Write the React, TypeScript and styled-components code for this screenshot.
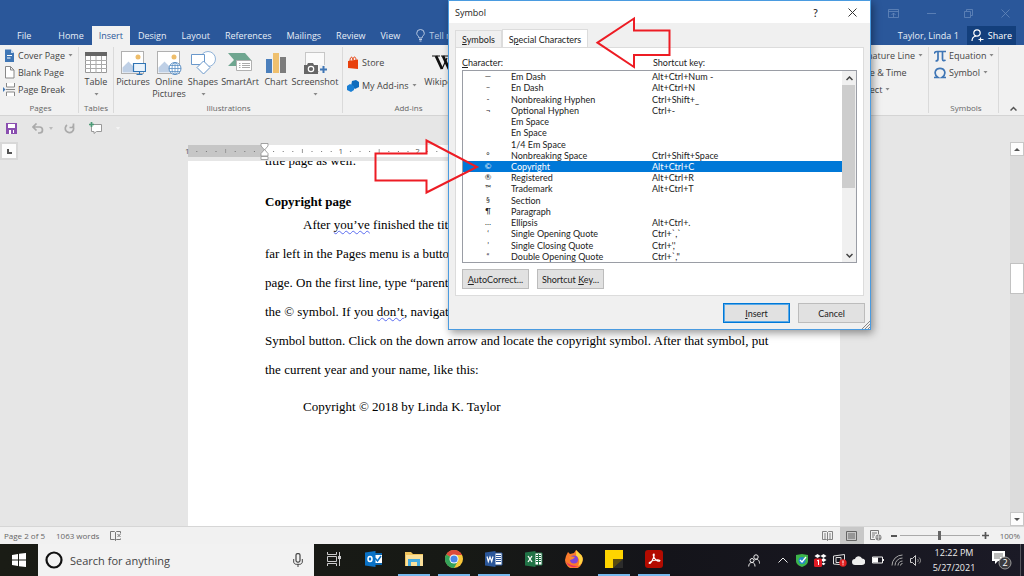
import React from 'react';
import styled, { createGlobalStyle, css } from 'styled-components';

const GlobalStyle = createGlobalStyle`
  *, *::before, *::after { box-sizing: border-box; }
  body { margin: 0; overflow: hidden; }
  body, button, input { font-family: 'Open Sans', 'Noto Sans', sans-serif; font-size: 9px; }
  button { border: 0; padding: 0; background: none; color: inherit; cursor: pointer; }
  svg { display: block; flex: none; }
  p, h2, ul { margin: 0; padding: 0; }
`;

const Desktop = styled.div`
  position: relative;
  display: flex;
  flex-direction: column;
  height: 100vh;
  background: #e6e6e6;
  color: #444;
  overflow: hidden;
  white-space: nowrap;
`;

/* ---------- title bar and tabs ---------- */

const TitleBar = styled.header`
  display: flex;
  justify-content: flex-end;
  align-items: center;
  height: 26px;
  padding: 0 14px;
  gap: 28px;
  background: #2a579a;
  color: #6688bb;
`;

const TabBar = styled.nav`
  display: flex;
  height: 19px;
  padding-left: 10px;
  background: #2a579a;
  color: #e8eef7;
`;

const RibbonTab = styled.button<{ $active?: boolean; $file?: boolean }>`
  padding: 0 7px;
  margin-right: ${p => (p.$file ? '13px' : '1px')};
  font-size: 9px;
  line-height: 19px;
  ${p => p.$active && css`
    background: #f1f1f1;
    color: #2a579a;
  `}
`;

const TellMe = styled.button`
  display: flex;
  align-items: center;
  gap: 4px;
  margin-left: 8px;
  color: #b9c9e2;
`;

const Account = styled.div`
  display: flex;
  align-items: center;
  margin-left: auto;
  gap: 8px;
`;

const ShareButton = styled.button`
  display: flex;
  align-items: center;
  gap: 4px;
  height: 19px;
  padding: 0 4px;
  margin-right: 8px;
  background: #133f7c;
  color: #fff;
`;

/* ---------- ribbon ---------- */

const Ribbon = styled.section`
  display: flex;
  height: 71px;
  background: #f1f1f1;
  border-bottom: 1px solid #d4d4d4;
`;

const Group = styled.div<{ $width: number; $pad?: number }>`
  display: flex;
  flex-direction: column;
  justify-content: space-between;
  width: ${p => p.$width}px;
  flex: none;
  margin: 2px 0;
  padding-left: ${p => p.$pad ?? 0}px;
  border-right: 1px solid #dadada;
`;

const GroupBody = styled.div`
  display: flex;
`;

const GroupLabel = styled.div`
  font-size: 8px;
  line-height: 11px;
  text-align: center;
  color: #666;
`;

const Stack = styled.div<{ $roomy?: boolean }>`
  display: flex;
  flex-direction: column;
  gap: ${p => (p.$roomy ? '6px' : '0')};
  padding-top: ${p => (p.$roomy ? '7px' : '0')};
  margin-right: ${p => (p.$roomy ? '4px' : '0')};
`;

const SmallButton = styled.button`
  display: flex;
  align-items: center;
  gap: 3px;
  height: 17px;
  color: #444;
`;

const BigButton = styled.button<{ $width: number }>`
  display: flex;
  flex-direction: column;
  align-items: center;
  width: ${p => p.$width}px;
  padding-top: 2px;
  line-height: 12px;
  color: #444;
`;

const BigIcon = styled.span`
  display: flex;
  align-items: center;
  height: 27px;
`;

const CaretBox = styled.span`
  display: flex;
  align-items: center;
  height: 12px;
`;

const Filler = styled.div`
  flex: 1;
`;

const CollapseButton = styled.button`
  display: flex;
  align-items: flex-end;
  padding: 0 7px 4px 11px;
`;

const QuickAccess = styled.div`
  display: flex;
  align-items: center;
  height: 26px;
  padding: 0 0 2px 6px;
`;

const QuickButton = styled.button<{ $space: number }>`
  margin-right: ${p => p.$space}px;
`;

/* ---------- document ---------- */

const Workspace = styled.main`
  display: flex;
  flex: 1;
  min-height: 0;
`;

const LeftEdge = styled.div`
  width: 18px;
  flex: none;
`;

const TabSelector = styled.button`
  display: flex;
  align-items: center;
  justify-content: center;
  width: 18px;
  height: 18px;
  background: #fcfcfc;
  border: 2px solid #d8d8d8;
`;

const Canvas = styled.div`
  display: flex;
  flex-direction: column;
  align-items: center;
  flex: 1;
  min-width: 0;
`;

const RulerRow = styled.div`
  width: 654px;
  height: 19px;
  flex: none;
  svg { overflow: visible; }
`;

const Page = styled.article`
  flex: 1;
  width: 652px;
  min-height: 0;
  padding: 0 77px;
  overflow: hidden;
  background: #fff;
  color: #000;
  font-family: 'Liberation Serif', serif;
  font-size: 13px;
  line-height: 29px;
`;

const CutLine = styled.p`
  margin-top: -15px;
`;

const Heading = styled.h2`
  margin-top: 19px;
  font-size: 13px;
  line-height: 16px;
`;

const Line = styled.p<{ $indent?: boolean; $spaced?: boolean }>`
  padding-left: ${p => (p.$indent ? '38px' : '0')};
  margin-top: ${p => (p.$spaced ? '8px' : '0')};
`;

const Flagged = styled.span`
  text-decoration: underline wavy #5a6cf0 1px;
  text-underline-offset: 1px;
  text-decoration-skip-ink: none;
`;

const VScroll = styled.div`
  display: flex;
  flex-direction: column;
  width: 14px;
  flex: none;
  background: #dcdcdc;
`;

const ScrollArrow = styled.button`
  display: flex;
  align-items: center;
  justify-content: center;
  height: 14px;
  background: #fdfdfd;
  border: 1px solid #c8c8c8;
`;

const ScrollTrack = styled.div`
  flex: 1;
  padding-top: 107px;
`;

const ScrollThumb = styled.div`
  height: 31px;
  background: #fff;
  border: 1px solid #c2c2c2;
`;

/* ---------- status bar ---------- */

const StatusBar = styled.footer`
  display: flex;
  align-items: center;
  height: 18px;
  flex: none;
  padding: 0 4px;
  background: #f1f1f1;
  border-top: 1px solid #d6d6d6;
  color: #666;
  font-size: 8px;
`;

const StatusText = styled.span`
  margin-right: 11px;
`;

const ViewButton = styled.button<{ $on?: boolean }>`
  display: flex;
  align-items: center;
  justify-content: center;
  width: 24px;
  height: 17px;
  background: ${p => (p.$on ? '#c8c8c8' : 'transparent')};
`;

const ZoomStep = styled.button`
  display: flex;
  justify-content: center;
  width: 12px;
`;

const ZoomSlider = styled.input`
  appearance: none;
  width: 80px;
  height: 10px;
  margin: 0;
  background: linear-gradient(#aaa, #aaa) center / 100% 1px no-repeat;
  &::-webkit-slider-thumb {
    appearance: none;
    width: 3px;
    height: 9px;
    background: #666;
  }
`;

const ZoomValue = styled.span`
  margin-left: 8px;
`;

/* ---------- taskbar ---------- */

const Taskbar = styled.footer`
  display: flex;
  height: 32px;
  flex: none;
  background: linear-gradient(90deg, #1a1c15 0%, #171915 45%, #14141a 65%, #1b1a26 100%);
  color: #eee;
`;

const StartButton = styled.button`
  display: flex;
  align-items: center;
  justify-content: center;
  width: 38px;
`;

const SearchBox = styled.label`
  display: flex;
  align-items: center;
  width: 276px;
  padding: 0 11px 0 7px;
  gap: 7px;
  background: #f2f2f2;
`;

const SearchInput = styled.input`
  flex: 1;
  min-width: 0;
  padding: 0;
  border: 0;
  outline: 0;
  background: none;
  font-size: 11px;
  &::placeholder { color: #444; opacity: 1; }
`;

const TaskButtons = styled.div`
  display: flex;
  gap: 8px;
  padding-left: 4px;
`;

const TaskButton = styled.button<{ $open?: boolean }>`
  display: flex;
  align-items: center;
  justify-content: center;
  width: 32px;
  border-bottom: 2px solid ${p => (p.$open ? '#76b9ed' : 'transparent')};
`;

const Tray = styled.div`
  display: flex;
  align-items: center;
  margin-left: auto;
`;

const TrayButton = styled.button<{ $wide?: boolean }>`
  display: flex;
  justify-content: center;
  width: ${p => (p.$wide ? '38px' : '19px')};
`;

const Clock = styled.time`
  width: 58px;
  font-size: 9px;
  line-height: 15px;
  text-align: center;
`;

const Notifications = styled.button`
  display: flex;
  justify-content: center;
  width: 38px;
  height: 32px;
  align-items: center;
  border-right: 1px solid #55555c;
  margin-right: 3px;
`;

/* ---------- symbol dialog ---------- */

const Dialog = styled.section`
  position: absolute;
  left: 448px;
  top: 0;
  display: flex;
  flex-direction: column;
  width: 423px;
  height: 330px;
  background: #f0f0f0;
  border: 1px solid #4a9be0;
  box-shadow: 2px 3px 8px rgba(0, 0, 0, 0.4);
  color: #222;
  font-size: 9px;
  &, button { font-family: Lato, 'Open Sans', sans-serif; }
`;

const DialogTitle = styled.div`
  display: flex;
  align-items: center;
  height: 22px;
  padding: 0 13px 0 6px;
  background: #fff;
  font-family: 'Open Sans', sans-serif;
`;

const DialogName = styled.span`
  flex: 1;
`;

const TitleButton = styled.button<{ $space?: number }>`
  margin-right: ${p => p.$space ?? 0}px;
  font-size: 11px;
`;

const DialogTabs = styled.div`
  display: flex;
  align-items: flex-end;
  height: 24px;
  padding-left: 6px;
`;

const DialogTab = styled.button<{ $active?: boolean }>`
  height: ${p => (p.$active ? '19px' : '17px')};
  width: ${p => (p.$active ? '86px' : '47px')};
  margin-bottom: ${p => (p.$active ? '-1px' : '0')};
  font-size: 9px;
  background: ${p => (p.$active ? '#fff' : '#f0f0f0')};
  border: 1px solid #dcdcdc;
  border-bottom: 0;
`;

const Panel = styled.div`
  display: flex;
  flex-direction: column;
  height: 249px;
  margin: 0 6px;
  padding: 8px 6px 0;
  background: #fff;
  border: 1px solid #dcdcdc;
`;

const ColumnLabels = styled.div`
  display: grid;
  grid-template-columns: 191px 1fr;
  line-height: 14px;
`;

const ListFrame = styled.div`
  display: flex;
  height: 193px;
  border: 1px solid #9a9da5;
`;

const CharacterList = styled.ul`
  display: grid;
  grid-auto-rows: 1fr;
  flex: 1;
  list-style: none;
`;

const CharacterRow = styled.li<{ $selected?: boolean }>`
  display: grid;
  grid-template-columns: 48px 141px 1fr;
  align-items: center;
  min-height: 0;
  line-height: 11px;
  ${p => p.$selected && css`
    background: #0078d7;
    color: #fff;
  `}
`;

const Glyph = styled.span`
  padding-left: 2px;
  font-size: 8px;
  text-align: center;
`;

const ListScroll = styled.div`
  display: flex;
  flex-direction: column;
  width: 14px;
  background: #f0f0f0;
`;

const ListArrow = styled.button`
  display: flex;
  align-items: center;
  justify-content: center;
  height: 14px;
`;

const ListTrack = styled.div`
  flex: 1;
`;

const ListThumb = styled.div`
  height: 103px;
  margin-right: 1px;
  background: #cdcdcd;
`;

const ButtonRow = styled.div<{ $end?: boolean }>`
  display: flex;
  gap: 8px;
  margin-top: ${p => (p.$end ? '7px' : '6px')};
  padding-right: ${p => (p.$end ? '5px' : '0')};
  justify-content: ${p => (p.$end ? 'flex-end' : 'flex-start')};
`;

const PushButton = styled.button<{ $primary?: boolean }>`
  width: 67px;
  height: 20px;
  font-size: 9px;
  background: #e1e1e1;
  border: ${p => (p.$primary ? '1px solid #0078d7' : '1px solid #bcbcbc')};
  box-shadow: ${p => (p.$primary ? 'inset 0 0 0 1px #5aa9e6' : 'none')};
`;

const Grip = styled.span`
  position: absolute;
  right: 0;
  bottom: 0;
`;

const Annotations = styled.svg`
  position: absolute;
  left: 370px;
  top: 10px;
  pointer-events: none;
`;

/* ---------- drawings ---------- */

const Caret = () => (
  <svg width="5" height="3" viewBox="0 0 5 3"><path d="M.5 0h4L2.500 2.500z" fill="#888" /></svg>
);

const Svg = ({ w, h, box, children }: { w: number; h: number; box?: string; children: React.ReactNode }) => (
  <svg width={w} height={h} viewBox={box ?? `0 0 ${w} ${h}`} fill="none">{children}</svg>
);

const Photo = () => (
  <>
    <rect x=".5" y=".5" width="22" height="22" fill="#fff" stroke="#b0b0b0" />
    <circle cx="17" cy="6" r="2.500" fill="#eebd6a" />
    <path d="M1.500 21.500v-5l6-6 5 5 3-2 6 5v3z" fill="#bfd0e6" />
  </>
);

const Ruler = () => {
  const marks: React.ReactNode[] = [];
  for (let i = -8; i <= 60; i++) {
    const x = 77 + i * 9.6;
    if (i === 0) continue;
    if (i % 8 === 0) {
      marks.push(<text key={i} x={x} y="12" fontSize="8" textAnchor="middle" fill="#555">{Math.abs(i / 8)}</text>);
    } else if (i % 4 === 0) {
      marks.push(<path key={i} d={`M${x} 7v4`} stroke="#999" />);
    } else {
      marks.push(<rect key={i} x={x - 0.5} y="9" width="1" height="1" fill="#777" />);
    }
  }
  return (
    <Svg w={654} h={19}>
      <rect x="1" y="3" width="652" height="12" fill="#c6c6c6" />
      <rect x="77" y="3" width="499" height="12" fill="#fff" />
      {marks}
      <path d="M74 1.500h7v2.500l-3.500 4-3.500-4zM74 14v-2.500l3.500-4 3.500 4V14zM74 14.500h7v3h-7z" fill="#fff" stroke="#999" strokeWidth=".9" />
    </Svg>
  );
};

const characters: [string, string, string][] = [
  ['—', 'Em Dash', 'Alt+Ctrl+Num -'],
  ['–', 'En Dash', 'Alt+Ctrl+N'],
  ['-', 'Nonbreaking Hyphen', 'Ctrl+Shift+_'],
  ['¬', 'Optional Hyphen', 'Ctrl+-'],
  ['', 'Em Space', ''],
  ['', 'En Space', ''],
  ['', '1/4 Em Space', ''],
  ['°', 'Nonbreaking Space', 'Ctrl+Shift+Space'],
  ['©', 'Copyright', 'Alt+Ctrl+C'],
  ['®', 'Registered', 'Alt+Ctrl+R'],
  ['™', 'Trademark', 'Alt+Ctrl+T'],
  ['§', 'Section', ''],
  ['¶', 'Paragraph', ''],
  ['…', 'Ellipsis', 'Alt+Ctrl+.'],
  ['‘', 'Single Opening Quote', 'Ctrl+`,`'],
  ['’', 'Single Closing Quote', "Ctrl+','"],
  ['“', 'Double Opening Quote', 'Ctrl+`,"'],
];

const SymbolDialog = () => (
  <Dialog role="dialog" aria-label="Symbol">
    <DialogTitle>
      <DialogName>Symbol</DialogName>
      <TitleButton $space={30} aria-label="Help">?</TitleButton>
      <TitleButton aria-label="Close">
        <Svg w={9} h={9}><path d="M.5.5l8 8M8.500.5l-8 8" stroke="#333" /></Svg>
      </TitleButton>
    </DialogTitle>
    <DialogTabs role="tablist">
      <DialogTab role="tab"><u>S</u>ymbols</DialogTab>
      <DialogTab role="tab" $active>S<u>p</u>ecial Characters</DialogTab>
    </DialogTabs>
    <Panel>
      <ColumnLabels>
        <span id="character-label"><u>C</u>haracter:</span>
        <span>Shortcut key:</span>
      </ColumnLabels>
      <ListFrame>
        <CharacterList role="listbox" aria-labelledby="character-label">
          {characters.map(([glyph, name, keys]) => (
            <CharacterRow key={name} role="option" aria-selected={name === 'Copyright'} $selected={name === 'Copyright'}>
              <Glyph>{glyph}</Glyph>
              <span>{name}</span>
              <span>{keys}</span>
            </CharacterRow>
          ))}
        </CharacterList>
        <ListScroll>
          <ListArrow aria-label="Scroll up"><Svg w={7} h={5}><path d="M.5 4l3-3 3 3" stroke="#444" strokeWidth="1.500" /></Svg></ListArrow>
          <ListTrack><ListThumb /></ListTrack>
          <ListArrow aria-label="Scroll down"><Svg w={7} h={5}><path d="M.5 1l3 3 3-3" stroke="#444" strokeWidth="1.500" /></Svg></ListArrow>
        </ListScroll>
      </ListFrame>
      <ButtonRow>
        <PushButton><u>A</u>utoCorrect...</PushButton>
        <PushButton>Shortcut <u>K</u>ey...</PushButton>
      </ButtonRow>
    </Panel>
    <ButtonRow $end>
      <PushButton $primary><u>I</u>nsert</PushButton>
      <PushButton>Cancel</PushButton>
    </ButtonRow>
    <Grip><Svg w={8} h={8}><path d="M0 8l8-8M3 8l5-5M6 8l2-2" stroke="#888" /></Svg></Grip>
  </Dialog>
);

export default function App() {
  return (
    <Desktop>
      <GlobalStyle />
      <TitleBar>
        <button aria-label="Ribbon display options"><Svg w={11} h={9}><path d="M.5.5h10v8H.5zM.5 2.500h10M5.500 8V4M3.500 6l2-2 2 2" stroke="currentColor" strokeWidth=".8" /></Svg></button>
        <button aria-label="Minimize"><Svg w={9} h={9}><path d="M0 4.500h9" stroke="currentColor" strokeWidth=".8" /></Svg></button>
        <button aria-label="Restore"><Svg w={9} h={9}><path d="M.5 2.500h6v6h-6zM2.500 2V.5h6v6H7" stroke="currentColor" strokeWidth=".8" /></Svg></button>
        <button aria-label="Close window"><Svg w={9} h={9}><path d="M.5.5l8 8M8.500.5l-8 8" stroke="currentColor" strokeWidth=".8" /></Svg></button>
      </TitleBar>
      <TabBar>
        <RibbonTab $file>File</RibbonTab>
        <RibbonTab>Home</RibbonTab>
        <RibbonTab $active>Insert</RibbonTab>
        <RibbonTab>Design</RibbonTab>
        <RibbonTab>Layout</RibbonTab>
        <RibbonTab>References</RibbonTab>
        <RibbonTab>Mailings</RibbonTab>
        <RibbonTab>Review</RibbonTab>
        <RibbonTab>View</RibbonTab>
        <TellMe>
          <Svg w={9} h={13}><path d="M3 9C3 7 .7 6.500.7 4.300a3.800 3.800 0 017.600 0C8.300 6.500 6 7 6 9zM3 10.500h3M3.500 12h2" stroke="currentColor" /></Svg>
          Tell me
        </TellMe>
        <Account>
          Taylor, Linda 1
          <ShareButton>
            <Svg w={13} h={13}><path d="M1 12c0-3 1.500-4.500 4-5M9.500 8.500v4M7.500 10.500h5" stroke="#fff" strokeWidth="1.200" /><circle cx="6" cy="4" r="3.200" stroke="#fff" strokeWidth="1.200" /></Svg>
            Share
          </ShareButton>
        </Account>
      </TabBar>

      <Ribbon>
        <Group $width={79} $pad={3}>
          <Stack>
            <SmallButton>
              <Svg w={12} h={13}><path d="M2 .5h6L11 4v9H2z" fill="#3f76b5" /><path d="M8 .5V4h3" fill="#c7d9ee" /><path d="M4 6.500h5M4 9h3.500" stroke="#fff" /></Svg>
              Cover Page <Caret />
            </SmallButton>
            <SmallButton>
              <Svg w={12} h={13}><path d="M2.500.5h5L11 4v8H2.500zM7.500.5V4H11" fill="#fff" stroke="#888" /></Svg>
              Blank Page
            </SmallButton>
            <SmallButton>
              <Svg w={12} h={13}><path d="M3.500 0v4h8V0M3.500 13V9h8v4" fill="#fff" stroke="#888" /><path d="M3 6.500h9" stroke="#888" /><path d="M0 4l2.500 2.500L0 9z" fill="#3f76b5" /></Svg>
              Page Break
            </SmallButton>
          </Stack>
          <GroupLabel>Pages</GroupLabel>
        </Group>
        <Group $width={35}>
          <GroupBody>
            <BigButton $width={34}>
              <BigIcon><Svg w={22} h={21}><path d="M.5.5h21v20H.5z" fill="#fff" stroke="#999" /><path d="M0 0h22v4H0z" fill="#666" /><path d="M5.500 4v17M11 4v17M16.500 4v17M0 8.500h22M0 12.500h22M0 16.500h22" stroke="#aaa" /></Svg></BigIcon>
              Table<CaretBox><Caret /></CaretBox>
            </BigButton>
          </GroupBody>
          <GroupLabel>Tables</GroupLabel>
        </Group>
        <Group $width={229} $pad={1}>
          <GroupBody>
            <BigButton $width={36}>
              <BigIcon><Svg w={25} h={24}><Photo /><path d="M12.500 12.500h12v8h-12z" fill="#eaf3fb" stroke="#2f74b5" strokeWidth="1.200" /><path d="M18.500 21v2.500M15.500 23.500h6" stroke="#2f74b5" /></Svg></BigIcon>
              Pictures
            </BigButton>
            <BigButton $width={36}>
              <BigIcon><Svg w={25} h={24}><Photo /><circle cx="18" cy="17.500" r="6" fill="#fff" stroke="#5b8fc4" /><path d="M12 17.500h12M18 11.500v12M13 14.500h10M13 20.500h10" stroke="#5b8fc4" strokeWidth=".8" /><ellipse cx="18" cy="17.500" rx="3" ry="6" stroke="#5b8fc4" strokeWidth=".8" /></Svg></BigIcon>
              Online<br />Pictures
            </BigButton>
            <BigButton $width={32}>
              <BigIcon><Svg w={25} h={24}><circle cx="17" cy="8" r="7.500" fill="#fff" stroke="#8fb2d8" /><path d="M.5 3.500h13v10H.5z" fill="#fff" stroke="#6a98cb" /><path d="M12.500 10l6.500 6.500-6.500 6.500L6 16.500z" fill="#fff" stroke="#6a98cb" /></Svg></BigIcon>
              Shapes<CaretBox><Caret /></CaretBox>
            </BigButton>
            <BigButton $width={42}>
              <BigIcon><Svg w={25} h={21}><path d="M0 1h17l7 8-3 5H0l6-6z" fill="#6fa690" /><path d="M8.500 8.500h15v10h-15z" fill="#fff" stroke="#b0b0b0" /><path d="M11 11.500h1.500M14 11.500h8M11 13.500h1.500M14 13.500h8M11 15.500h1.500M14 15.500h8" stroke="#aaa" /></Svg></BigIcon>
              SmartArt
            </BigButton>
            <BigButton $width={30}>
              <BigIcon><Svg w={21} h={22}><path d="M0 7h6v14H0z" fill="#4b7fbc" /><path d="M7 1h6v20H7z" fill="#efc06e" /><path d="M14 5h6v16h-6z" fill="#7c7c7c" /></Svg></BigIcon>
              Chart
            </BigButton>
            <BigButton $width={48}>
              <BigIcon><Svg w={23} h={23}><path d="M1.500 1.500h19v19h-19z" fill="#fafafa" stroke="#999" strokeDasharray="1 1" /><path d="M0 14h3l1-2h5l1 2h4v9H0z" fill="#666" /><circle cx="7" cy="18" r="2.700" stroke="#fff" strokeWidth="1.200" /><path d="M15 14h8v9h-8z" fill="#f1f1f1" /><path d="M19.500 15v7M16 18.500h7" stroke="#3f76b5" strokeWidth="2" /></Svg></BigIcon>
              Screenshot<CaretBox><Caret /></CaretBox>
            </BigButton>
          </GroupBody>
          <GroupLabel>Illustrations</GroupLabel>
        </Group>
        <Group $width={128} $pad={4}>
          <GroupBody>
            <Stack $roomy>
              <SmallButton>
                <Svg w={12} h={14}><path d="M1 5l10-1.500V13L1 12z" fill="#e8400c" /><path d="M3 5c0-5 3-5 3-.5M6 4c0-4 3-4 3 0" stroke="#e8400c" /></Svg>
                Store
              </SmallButton>
              <SmallButton>
                <Svg w={12} h={12}><path d="M5 1l4-1 3 2v5L8 9 4 6z" fill="#0f6cbd" /><path d="M0 6l3-2 4 2v4l-3 2-4-2z" fill="#1a7fd4" /></Svg>
                My Add-ins <Caret />
              </SmallButton>
            </Stack>
            <BigButton $width={48}>
              <BigIcon><Svg w={26} h={16}><path d="M0 1h8M9 1h7M19 1h7" stroke="#111" strokeWidth="1.200" /><path d="M4 1l6 13M11 1l6 13" stroke="#111" strokeWidth="2.800" /><path d="M10 14l5-11M17 14l5.500-13" stroke="#111" strokeWidth="1.200" /></Svg></BigIcon>
              Wikipedia
            </BigButton>
          </GroupBody>
          <GroupLabel>Add-ins</GroupLabel>
        </Group>
        <Filler />
        <Group $width={74}>
          <Stack>
            <SmallButton>Signature Line <Caret /></SmallButton>
            <SmallButton>Date &amp; Time</SmallButton>
            <SmallButton>Object <Caret /></SmallButton>
          </Stack>
        </Group>
        <Group $width={70} $pad={5}>
          <Stack>
            <SmallButton>
              <Svg w={12} h={12}><path d="M0 3.500C1 1.500 2 1.500 3 1.500h9M4 2v7c0 1.500-1 2-2.500 2M8.500 2v7c0 2 1.500 2 3 1" stroke="#3f76b5" strokeWidth="1.700" /></Svg>
              Equation <Caret />
            </SmallButton>
            <SmallButton>
              <Svg w={12} h={12}><path d="M0 10.500h4C1 8.500.8 6 1.500 4 3 .5 9 .5 10.500 4c.7 2 .5 4.500-2.500 6.500h4" stroke="#3f76b5" strokeWidth="1.700" /></Svg>
              Symbol <Caret />
            </SmallButton>
          </Stack>
          <GroupLabel>Symbols</GroupLabel>
        </Group>
        <CollapseButton aria-label="Collapse ribbon"><Svg w={7} h={5}><path d="M.5 4.500l3-3 3 3" stroke="#555" strokeWidth="1.500" /></Svg></CollapseButton>
      </Ribbon>

      <QuickAccess>
        <QuickButton $space={15} aria-label="Save"><Svg w={11} h={11}><path d="M0 0h11v11H0z" fill="#8a4fb0" /><path d="M2 1h7v4H2zM3 7h2v4H3zM7 7h1v3H7z" fill="#fff" /></Svg></QuickButton>
        <QuickButton $space={5} aria-label="Undo"><Svg w={12} h={11}><path d="M1 4h6.500a3 3 0 010 6H6M4.500.5L1 4l3.500 3.500" stroke="#aaa" strokeWidth="1.700" /></Svg></QuickButton>
        <QuickButton $space={11} aria-label="Undo history"><Svg w={4} h={3}><path d="M0 0h4L2 3z" fill="#bbb" /></Svg></QuickButton>
        <QuickButton $space={14} aria-label="Repeat"><Svg w={11} h={11}><path d="M3 2a4.200 4.200 0 105.500.5M5.500 4.500h4V.5" stroke="#aaa" strokeWidth="1.700" /></Svg></QuickButton>
        <QuickButton $space={14} aria-label="New comment"><Svg w={13} h={12}><path d="M2.500 2.500h10v7h-5L5 11.500v-2H2.500z" fill="#fff" stroke="#999" /><path d="M2.500 0v5M0 2.500h5" stroke="#4c9a76" strokeWidth="1.700" /></Svg></QuickButton>
        <QuickButton $space={0} aria-label="Customize toolbar"><Svg w={4} h={3}><path d="M0 0h4L2 3z" fill="#f4f4f4" /></Svg></QuickButton>
      </QuickAccess>

      <Workspace>
        <LeftEdge>
          <TabSelector aria-label="Tab stop"><Svg w={5} h={5}><path d="M1 0v4h4" stroke="#555" strokeWidth="2" /></Svg></TabSelector>
        </LeftEdge>
        <Canvas>
          <RulerRow><Ruler /></RulerRow>
          <Page>
            <CutLine>title page as well.</CutLine>
            <Heading>Copyright page</Heading>
            <Line $indent>After <Flagged>you’ve</Flagged> finished the title</Line>
            <Line>far left in the Pages menu is a button</Line>
            <Line>page. On the first line, type “parenthesis</Line>
            <Line>the © symbol. If you <Flagged>don’t</Flagged>, navigate</Line>
            <Line>Symbol button. Click on the down arrow and locate the copyright symbol. After that symbol, put</Line>
            <Line>the current year and your name, like this:</Line>
            <Line $indent $spaced>Copyright © 2018 by Linda K. Taylor</Line>
          </Page>
        </Canvas>
        <VScroll>
          <ScrollArrow aria-label="Scroll page up"><Svg w={6} h={3}><path d="M0 3h6L3 0z" fill="#555" /></Svg></ScrollArrow>
          <ScrollTrack><ScrollThumb /></ScrollTrack>
          <ScrollArrow aria-label="Scroll page down"><Svg w={6} h={3}><path d="M0 0h6L3 3z" fill="#555" /></Svg></ScrollArrow>
        </VScroll>
      </Workspace>

      <StatusBar>
        <StatusText>Page 2 of 5</StatusText>
        <StatusText>1063 words</StatusText>
        <Svg w={12} h={10}><path d="M.5.5h4l1 1v8l-1-1h-4zM5.500 1.500l1-1h4v2M5.500 9.500l1-1h4v-1M7.500 3l3 3M10.500 3l-3 3" stroke="#777" /></Svg>
        <Filler />
        <ViewButton aria-label="Read mode"><Svg w={11} h={10}><path d="M.5.5h4l1 1 1-1h4v8h-4l-1 1-1-1h-4zM5.500 1.500v8M2 3h2M2 5h2M2 7h2M7 3h2M7 5h2M7 7h2" stroke="#777" strokeWidth=".9" /></Svg></ViewButton>
        <ViewButton $on aria-label="Print layout"><Svg w={11} h={10}><path d="M.5.5h10v9H.5zM2 3h7M2 5h7M2 7h7" stroke="#666" /></Svg></ViewButton>
        <ViewButton aria-label="Web layout"><Svg w={12} h={11}><path d="M5 9.500H.5v-9h8V4M2 3h5M2 5h3M2 7h2" stroke="#777" /><circle cx="8.500" cy="7.500" r="3" fill="#888" /><path d="M6 7h5M8.500 5v5" stroke="#ddd" strokeWidth=".7" /></Svg></ViewButton>
        <ZoomStep aria-label="Zoom out"><Svg w={6} h={2}><path d="M0 1h6" stroke="#555" strokeWidth="2" /></Svg></ZoomStep>
        <ZoomSlider type="range" aria-label="Zoom" min={0} max={100} defaultValue={50} />
        <ZoomStep aria-label="Zoom in"><Svg w={7} h={7}><path d="M0 3.500h7M3.500 0v7" stroke="#555" strokeWidth="1.700" /></Svg></ZoomStep>
        <ZoomValue>100%</ZoomValue>
      </StatusBar>

      <Taskbar>
        <StartButton aria-label="Start"><Svg w={14} h={14}><path d="M0 2l6-1v5.500H0zM7 .8L14 0v6.500H7zM0 7.500h6V13l-6-1zM7 7.500h7V14l-7-.8z" fill="#fff" /></Svg></StartButton>
        <SearchBox>
          <Svg w={18} h={18}><circle cx="9" cy="9" r="7.500" stroke="#111" strokeWidth="2.200" /></Svg>
          <SearchInput placeholder="Search for anything" aria-label="Search" />
          <Svg w={10} h={14}><rect x="3" y=".6" width="4" height="8.500" rx="1.500" stroke="#444" strokeWidth="1.200" /><path d="M.7 6v3c0 1 1 2.300 2.500 2.300h3.600c1.500 0 2.500-1.300 2.500-2.300V6M5 11v3" stroke="#444" /></Svg>
        </SearchBox>
        <TaskButtons>
          <TaskButton aria-label="Task view"><Svg w={14} h={14}><path d="M.5 0v2.500h9V0M.5 14v-2.500h9V14M.5 4.500h9v5h-9zM12.500 0v14" stroke="#ccc" /><path d="M11 4h3v3h-3z" fill="#ccc" /></Svg></TaskButton>
          <TaskButton aria-label="Outlook"><Svg w={18} h={18}><path d="M8 3h9v12H8z" fill="#0a64ad" /><path d="M9 5h8v8H9z" fill="#fff" /><path d="M10 8l2.500 3L16 6" stroke="#0a72c6" strokeWidth="1.500" /><path d="M0 2.500L10.500 1v16L0 15.500z" fill="#0a72c6" /><ellipse cx="5" cy="9" rx="2" ry="2.500" stroke="#fff" strokeWidth="1.500" /></Svg></TaskButton>
          <TaskButton $open aria-label="File Explorer"><Svg w={18} h={16}><path d="M0 1h6l2 2h10v12H0z" fill="#f0c35c" /><path d="M1 4h17v11H1z" fill="#fbe09a" /><path d="M3 8h12v7h-3v-4H6v4H3z" fill="#45aadf" /></Svg></TaskButton>
          <TaskButton $open aria-label="Chrome"><Svg w={18} h={18}><circle cx="9" cy="9" r="9" fill="#f8c73a" /><path d="M9 9L1.200 4.500A9 9 0 0116.800 4.500L17 5H9z" fill="#dd4b3c" /><path d="M1.200 4.500A9 9 0 009 18l4-7-4-2z" fill="#35a25a" /><circle cx="9" cy="9" r="4.500" fill="#fff" /><circle cx="9" cy="9" r="3.600" fill="#4a86e8" /></Svg></TaskButton>
          <TaskButton $open aria-label="Word"><Svg w={18} h={18}><path d="M9 3h8v12H9z" fill="#fff" stroke="#2b579a" /><path d="M11 5.500h5M11 7.500h5M11 9.500h5M11 11.500h5" stroke="#2b579a" /><path d="M0 2.500L10.500 1v16L0 15.500z" fill="#2b579a" /><path d="M2 6.500l1.300 5L5 7l1.700 4.500L8 6.500" stroke="#fff" strokeWidth="1.200" /></Svg></TaskButton>
          <TaskButton aria-label="Excel"><Svg w={18} h={18}><path d="M9 3h8v12H9z" fill="#fff" stroke="#217346" /><path d="M11 5.500h5M11 7.500h5M11 9.500h5M11 11.500h5M13.500 4v11" stroke="#217346" /><path d="M0 2.500L10.500 1v16L0 15.500z" fill="#217346" /><path d="M3 6l4 6M7 6l-4 6" stroke="#fff" strokeWidth="1.300" /></Svg></TaskButton>
          <TaskButton aria-label="Firefox"><Svg w={18} h={18}><path d="M1 6l2-4 2 2 4-1 2-3 4 4c2 1 3 4 2.700 6A8.800 8.800 0 010 10z" fill="#fb7b2c" /><path d="M11 0l4 4c2 1 3 4 2.700 6-.5 3-2 5-4.500 6 2-5 1-8-2-10z" fill="#ffd541" /><path d="M1 12a8.500 8.500 0 0012 4c-4 .5-8-1-12-4z" fill="#ec2f63" /><circle cx="9" cy="9.500" r="4" fill="#8045d8" /><path d="M4 6l6 1-2 2-3 1z" fill="#fb8a2c" /></Svg></TaskButton>
          <TaskButton $open aria-label="Sticky Notes"><Svg w={18} h={18}><path d="M0 0h18v18H0z" fill="#ffd400" /><path d="M8 18V9h10v9z" fill="#4a4220" /><path d="M18 9v9H8z" fill="#2c2c2c" /><path d="M8 18V9h10z" fill="#5a4c10" /></Svg></TaskButton>
          <TaskButton $open aria-label="Acrobat"><Svg w={18} h={18}><rect width="18" height="18" rx="3" fill="#b30b00" /><path d="M9 4c-2 0 0 4 2 6 2 1.500 4 1.500 4 .5s-7-1-10.500 2c-1 1 .5 1.500 1.500 0 2-3 4-8 3-8.500z" stroke="#fff" strokeWidth="1.100" /></Svg></TaskButton>
        </TaskButtons>
        <Tray>
          <TrayButton $wide aria-label="People"><Svg w={12} h={13}><circle cx="8" cy="3" r="2.200" stroke="#eee" /><circle cx="4" cy="6.500" r="2" stroke="#eee" /><path d="M.7 12.500C.7 10 2 8.500 4 8.500s3 1.500 3 4M6.500 6c3-1.500 5 0 5 3.500" stroke="#eee" /></Svg></TrayButton>
          <TrayButton aria-label="Hidden icons"><Svg w={10} h={6}><path d="M.5 5.500L5 1l4.500 4.500" stroke="#eee" /></Svg></TrayButton>
          <TrayButton aria-label="Security"><Svg w={12} h={13}><path d="M0 1l6-1 6 1v6c0 3-3 5-6 6-3-1-6-3-6-6z" fill="#3db54a" /><circle cx="6" cy="6.500" r="3.500" fill="#2388c8" /><path d="M4 6l2 2 4-5" stroke="#fff" strokeWidth="1.300" /></Svg></TrayButton>
          <TrayButton aria-label="Dropbox"><Svg w={13} h={13}><path d="M3.500 0L6.500 2l-3 2-3-2zM9.500 0l3 2-3 2-3-2zM9.500 4l3 2-3 2-3-2zM9.500 8.500l2 1.300-2 1.500-2-1.500z" fill="#fff" /><rect y="4.500" width="8" height="8.500" rx="1.500" fill="#e01b24" /><path d="M3 7l1.500-1v5" stroke="#fff" /></Svg></TrayButton>
          <TrayButton aria-label="Updates"><Svg w={14} h={13}><path d="M.5 2l11-1.500V11L.5 10z" stroke="#ddd" /><path d="M3 3.500h5v5H3z" stroke="#ddd" /><circle cx="10" cy="9" r="3.700" fill="#e02020" /><path d="M10 6.500v3M10 10.300v1" stroke="#fff" /></Svg></TrayButton>
          <TrayButton aria-label="OneDrive"><Svg w={13} h={9}><path d="M3 9a3 3 0 010-6c1-3 5-4 7-.5A3.200 3.200 0 0110 9z" fill="#eee" /></Svg></TrayButton>
          <TrayButton aria-label="Battery"><Svg w={12} h={8}><path d="M.5 1h10v6H.5zM11.500 3v2" stroke="#eee" /><path d="M1 1.500h5v5H1z" fill="#fff" /></Svg></TrayButton>
          <TrayButton aria-label="Network"><Svg w={12} h={12}><path d="M1 11.500A10.500 10.500 0 0111.500 1M4 11.500A7.500 7.500 0 0111.500 4M7 11.500A4.500 4.500 0 0111.500 7M9.500 11.500a2 2 0 012-2" stroke="#aaa" /></Svg></TrayButton>
          <TrayButton aria-label="Volume"><Svg w={12} h={11}><path d="M.5 3.500h2l3-3v10l-3-3h-2z" stroke="#ccc" /><path d="M7.500 4c1 1 1 2 0 3M9 2.500c2 2 2 4 0 6" stroke="#999" /></Svg></TrayButton>
          <Clock>12:22 PM<br />5/27/2021</Clock>
          <Notifications aria-label="Notifications, 2 new">
            <Svg w={20} h={20}><path d="M0 1h13v10H6l-3 3v-3H0z" fill="#fff" /><path d="M2 4h9M2 6h9M2 8h6" stroke="#555" strokeWidth=".8" /><circle cx="13" cy="13" r="6" fill="#3c3c40" stroke="#999" /><text x="13" y="16" fontSize="9" textAnchor="middle" fill="#fff">2</text></Svg>
          </Notifications>
        </Tray>
      </Taskbar>

      <SymbolDialog />
      <Annotations width="310" height="190" viewBox="370 10 310 190" fill="none" stroke="#ed1c24" strokeWidth="2" aria-hidden="true">
        <path d="M375.500 153.500h51v-13L477 167l-50.500 25.500v-12h-51z" />
        <path d="M597.500 42.700l36.500-24.200v12h35.500v24.500H634v12z" />
      </Annotations>
    </Desktop>
  );
}
